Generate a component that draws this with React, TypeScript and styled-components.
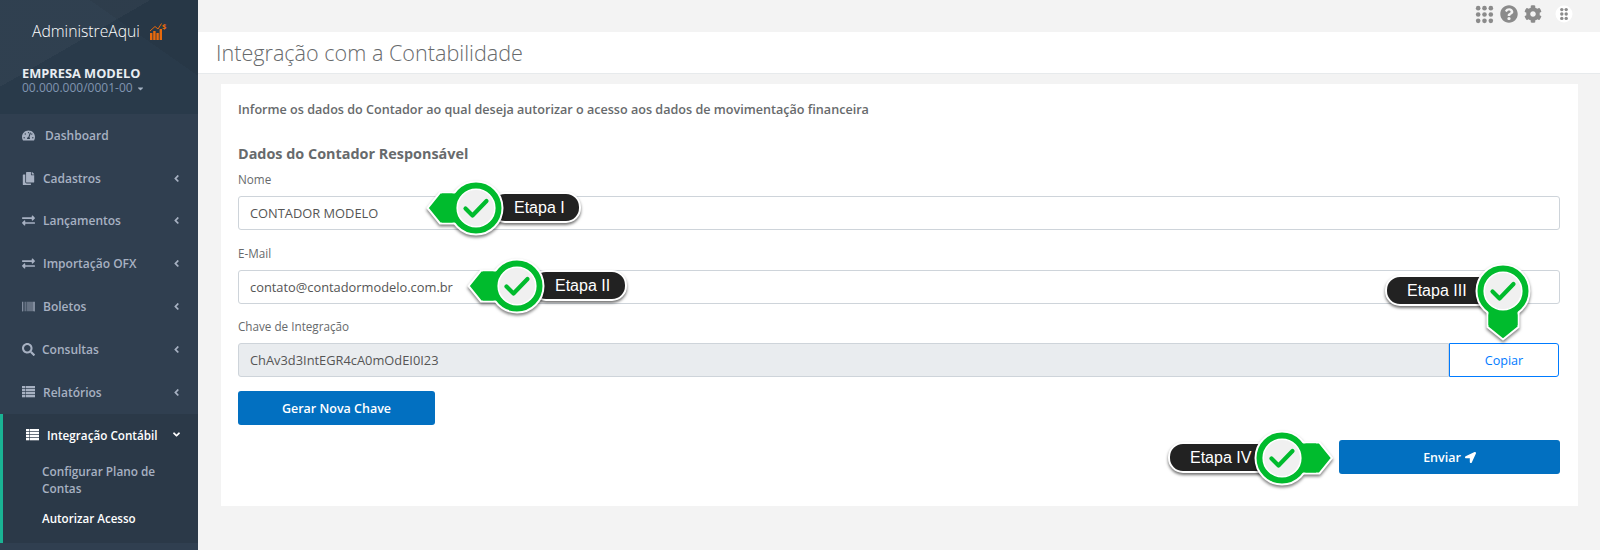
import styled, { createGlobalStyle } from "styled-components";
import {
  FaTachometerAlt,
  FaCopy,
  FaExchangeAlt,
  FaBarcode,
  FaSearch,
  FaAngleLeft,
  FaAngleDown,
  FaCaretDown,
  FaLocationArrow,
  FaQuestionCircle,
  FaCog,
} from "react-icons/fa";

const GlobalStyle = createGlobalStyle`
  html, body { margin: 0; padding: 0; }
  body { font-family: "Open Sans", sans-serif; background: #f3f3f3; color: #676a6c; }
  * { box-sizing: border-box; }
`;

const Page = styled.div`
  position: relative;
  display: flex;
  width: 1600px;
  height: 550px;
  overflow: hidden;
`;

const Sidebar = styled.aside`
  width: 198px;
  flex-shrink: 0;
  background: #303f50;
  display: flex;
  flex-direction: column;
`;

const SideHeader = styled.div`
  height: 114px;
  padding: 21px 0 0 22px;
  background:
    linear-gradient(150deg, rgba(255, 255, 255, 0.03) 0 38%, transparent 38%),
    linear-gradient(215deg, rgba(0, 0, 0, 0.06) 0 30%, transparent 30%),
    #293a4a;
`;

const Logo = styled.div`
  display: flex;
  align-items: center;
  gap: 10px;
  padding-left: 10px;
  font-size: 15.7px;
  font-weight: 300;
  color: #fff;
  height: 20px;
`;

const Company = styled.div`
  margin-top: 24px;
  font-size: 12.8px;
  font-weight: 700;
  line-height: 16px;
  color: #e8edf2;
`;

const Cnpj = styled.div`
  display: flex;
  align-items: center;
  gap: 3px;
  font-size: 12px;
  line-height: 14px;
  color: #8095b0;
  svg { font-size: 9px; color: #a3b1c2; }
`;

const NavList = styled.nav`
  display: flex;
  flex-direction: column;
`;

const NavItem = styled.div<{ $gap: number }>`
  height: 42.8px;
  padding: 0 16px 0 22px;
  display: flex;
  align-items: center;
  gap: ${(p) => p.$gap}px;
  font-size: 12px;
  font-weight: 600;
  color: #a7b1c2;
  > svg:first-child { font-size: 13px; width: 13px; flex-shrink: 0; }
`;

const Arrow = styled.span`
  margin-left: auto;
  display: flex;
  font-size: 11px;
`;

const ActiveGroup = styled.div`
  height: 129px;
  background: #2b3948;
  border-left: 3px solid #1ab394;
`;

const ActiveHead = styled.div`
  height: 42px;
  padding: 0 16px 0 23px;
  display: flex;
  align-items: center;
  gap: 8px;
  font-size: 11.7px;
  font-weight: 600;
  color: #fff;
  > svg:first-child { font-size: 13px; width: 13px; }
`;

const SubItem = styled.div<{ $active?: boolean }>`
  margin: ${(p) => (p.$active ? "13px" : "7px")} 20px 0 39px;
  font-size: ${(p) => (p.$active ? "11.6px" : "11.8px")};
  line-height: 17px;
  font-weight: 600;
  color: ${(p) => (p.$active ? "#fff" : "#a7b1c2")};
`;

const Main = styled.main`
  flex: 1;
  display: flex;
  flex-direction: column;
`;

const TopBar = styled.div`
  height: 32px;
  display: flex;
  align-items: center;
  justify-content: flex-end;
  padding-right: 27px;
  color: #8b8b8b;
`;

const TopIcons = styled.div`
  display: flex;
  align-items: center;
  gap: 6px;
  margin-top: -4px;
`;

const AppsDot = styled.svg`
  margin-left: 7px;
`;

const TitleBar = styled.div`
  height: 42px;
  background: #fff;
  padding-left: 18px;
  border-bottom: 1px solid #e7eaec;
  display: flex;
  align-items: center;
`;

const Title = styled.h1`
  margin: 0;
  font-size: 21.6px;
  font-weight: 300;
  color: #676a6c;
`;

const Card = styled.section`
  margin: 10px 22px 0 23px;
  height: 422px;
  background: #fff;
  padding: 17px 18px 0 17px;
`;

const Intro = styled.p`
  margin: 0;
  font-size: 12.6px;
  line-height: 17px;
  font-weight: 600;
`;

const SectionTitle = styled.h3`
  margin: 26px 0 0;
  font-size: 14.4px;
  line-height: 19px;
  font-weight: 700;
`;

const Label = styled.label`
  display: block;
  margin-top: 8px;
  font-size: 11.7px;
  line-height: 17px;
  height: 17px;
  color: #676a6c;
`;

const Field = styled.div`
  margin-top: 8px;
  height: 34px;
  display: flex;
  & + label { margin-top: 14.5px; }
`;

const Input = styled.div<{ $disabled?: boolean }>`
  flex: 1;
  display: flex;
  align-items: center;
  padding: 0 11px;
  font-size: 12.85px;
  color: #555;
  background: ${(p) => (p.$disabled ? "#e9ecef" : "#fff")};
  border: 1px solid #ced4da;
  border-radius: ${(p) => (p.$disabled ? "3px 0 0 3px" : "3px")};
`;

const CopyButton = styled.button`
  width: 110px;
  margin-right: 1px;
  background: #fff;
  border: 1px solid #007bff;
  border-radius: 0 3px 3px 0;
  color: #007bff;
  font: 400 12.6px "Open Sans", sans-serif;
`;

const PrimaryButton = styled.button<{ $w: number }>`
  width: ${(p) => p.$w}px;
  height: 34px;
  background: #0270c1;
  border: none;
  border-radius: 3px;
  color: #fff;
  font: 600 12.5px "Open Sans", sans-serif;
  display: flex;
  align-items: center;
  justify-content: center;
  gap: 4px;
`;

const GenerateRow = styled.div`
  margin-top: 14px;
`;

const SendRow = styled.div`
  margin-top: 15px;
  display: flex;
  justify-content: flex-end;
`;

/* floating "Etapa" callouts painted over the form */
const Step = styled.div<{ $x: number; $y: number }>`
  position: absolute;
  left: ${(p) => p.$x}px;
  top: ${(p) => p.$y}px;
  width: 0;
  height: 0;
`;

const Pill = styled.div<{ $left: number; $width: number; $pad: number }>`
  position: absolute;
  left: ${(p) => p.$left}px;
  top: -16px;
  width: ${(p) => p.$width}px;
  height: 31px;
  padding-left: ${(p) => p.$pad}px;
  background: #222;
  border: 2px solid #fff;
  border-radius: 15px;
  box-shadow: 0 2px 3px rgba(0, 0, 0, 0.55);
  font: 400 16px/27px "Liberation Sans", Arial, sans-serif;
  color: #fff;
  white-space: nowrap;
`;

const PinSvg = styled.svg`
  position: absolute;
  left: -60px;
  top: -60px;
  overflow: visible;
  filter: drop-shadow(0 2px 1.5px rgba(0, 0, 0, 0.5));
`;

function Pin({ angle, reach = 48.5 }: { angle: number; reach?: number }) {
  return (
    <PinSvg width={120} height={120} viewBox="-60 -60 120 120">
      <g transform={`rotate(${angle})`}>
        <path
          d={`M-16 -15.5 L-${reach - 12.5} -15.5 L-${reach} 0 L-${reach - 12.5} 15.5 L-16 15.5 Z`}
          fill="#00bb2d"
          stroke="#fff"
          strokeWidth={2}
        />
      </g>
      <circle r={26.5} fill="#00bb2d" stroke="#fff" strokeWidth={2} />
      <g transform={`rotate(${angle})`}>
        <path d="M-34 -14.5 L-14 -14.5 L-14 14.5 L-34 14.5 Z" fill="#00bb2d" />
      </g>
      <circle r={18.8} fill="#f0f0f0" stroke="#fff" strokeWidth={1.6} />
      <path
        d="M-10.5 0.5 L-3.5 7.5 L10.5 -7"
        fill="none"
        stroke="#00bb2d"
        strokeWidth={4.2}
        strokeLinecap="round"
        strokeLinejoin="round"
      />
    </PinSvg>
  );
}

function LogoMark() {
  return (
    <svg width="17" height="18" viewBox="0 0 17 18">
      <g fill="#e8690c">
        <rect x="0" y="11" width="2.4" height="7" />
        <rect x="3.2" y="9" width="2.4" height="9" />
        <rect x="6.4" y="11" width="2.4" height="7" />
        <rect x="9.6" y="7" width="2.4" height="11" />
      </g>
      <path d="M0 9 L5 4.5 L8 7 L11.5 1.5" fill="none" stroke="#e8690c" strokeWidth="1" />
      <text x="12" y="7" fontSize="7.5" fontWeight="700" fontFamily="Open Sans" fill="#e8690c">
        $
      </text>
    </svg>
  );
}

function TableIcon({ color = "currentColor" }: { color?: string }) {
  return (
    <svg width="13" height="12" viewBox="0 0 13 12">
      {[0, 3, 6, 9].map((y) => (
        <g key={y} fill={color}>
          <rect x="0" y={y} width="3" height="2.3" />
          <rect x="3.6" y={y} width="9.4" height="2.3" />
        </g>
      ))}
    </svg>
  );
}

function Dots({ cols, rows, step, r, color }: { cols: number; rows: number; step: number; r: number; color: string }) {
  const cells = [];
  for (let y = 0; y < rows; y++) {
    for (let x = 0; x < cols; x++) {
      cells.push(<circle key={`${x}-${y}`} cx={step * x + step / 2} cy={step * y + step / 2} r={r} fill={color} />);
    }
  }
  return <g>{cells}</g>;
}

const menu = [
  { label: "Cadastros", icon: <FaCopy />, gap: 8 },
  { label: "Lançamentos", icon: <FaExchangeAlt />, gap: 8 },
  { label: "Importação OFX", icon: <FaExchangeAlt />, gap: 8 },
  { label: "Boletos", icon: <FaBarcode />, gap: 8 },
  { label: "Consultas", icon: <FaSearch />, gap: 7 },
  { label: "Relatórios", icon: <TableIcon />, gap: 8 },
];

export default function App() {
  return (
    <Page>
      <GlobalStyle />
      <Sidebar>
        <SideHeader>
          <Logo>
            AdministreAqui
            <LogoMark />
          </Logo>
          <Company>EMPRESA MODELO</Company>
          <Cnpj>
            00.000.000/0001-00 <FaCaretDown />
          </Cnpj>
        </SideHeader>
        <NavList>
          <NavItem $gap={10}>
            <FaTachometerAlt />
            Dashboard
          </NavItem>
          {menu.map((item) => (
            <NavItem key={item.label} $gap={item.gap}>
              {item.icon}
              {item.label}
              <Arrow>
                <FaAngleLeft />
              </Arrow>
            </NavItem>
          ))}
          <ActiveGroup>
            <ActiveHead>
              <TableIcon color="#fff" />
              Integração Contábil
              <Arrow>
                <FaAngleDown />
              </Arrow>
            </ActiveHead>
            <SubItem>Configurar Plano de Contas</SubItem>
            <SubItem $active>Autorizar Acesso</SubItem>
          </ActiveGroup>
        </NavList>
      </Sidebar>
      <Main>
        <TopBar>
          <TopIcons>
            <svg width="19" height="19" viewBox="0 0 19 19">
              <Dots cols={3} rows={3} step={6.33} r={2.3} color="#8b8b8b" />
            </svg>
            <FaQuestionCircle size={18} />
            <FaCog size={18} />
            <AppsDot width="18" height="18" viewBox="0 0 18 18">
              <circle cx="9" cy="9" r="8.5" fill="#fff" />
              <g transform="translate(4.6 2.4)">
                <Dots cols={2} rows={3} step={4.4} r={1.7} color="#8b8b8b" />
              </g>
            </AppsDot>
          </TopIcons>
        </TopBar>
        <TitleBar>
          <Title>Integração com a Contabilidade</Title>
        </TitleBar>
        <Card>
          <Intro>Informe os dados do Contador ao qual deseja autorizar o acesso aos dados de movimentação financeira</Intro>
          <SectionTitle>Dados do Contador Responsável</SectionTitle>
          <Label>Nome</Label>
          <Field>
            <Input>CONTADOR MODELO</Input>
          </Field>
          <Label>E-Mail</Label>
          <Field>
            <Input>contato@contadormodelo.com.br</Input>
          </Field>
          <Label>Chave de Integração</Label>
          <Field>
            <Input $disabled>ChAv3d3IntEGR4cA0mOdEI0I23</Input>
            <CopyButton>Copiar</CopyButton>
          </Field>
          <GenerateRow>
            <PrimaryButton $w={197}>Gerar Nova Chave</PrimaryButton>
          </GenerateRow>
          <SendRow>
            <PrimaryButton $w={221}>
              Enviar <FaLocationArrow size={11} />
            </PrimaryButton>
          </SendRow>
        </Card>
      </Main>

      <Step $x={476} $y={208}>
        <Pill $left={14} $width={91} $pad={22}>
          Etapa I
        </Pill>
        <Pin angle={0} />
      </Step>
      <Step $x={517} $y={286}>
        <Pill $left={14} $width={96} $pad={22}>
          Etapa II
        </Pill>
        <Pin angle={0} />
      </Step>
      <Step $x={1503} $y={291}>
        <Pill $left={-118} $width={130} $pad={20}>
          Etapa III
        </Pill>
        <Pin angle={-90} />
      </Step>
      <Step $x={1282} $y={458}>
        <Pill $left={-114} $width={129} $pad={20}>
          Etapa IV
        </Pill>
        <Pin angle={180} reach={50} />
      </Step>
    </Page>
  );
}
